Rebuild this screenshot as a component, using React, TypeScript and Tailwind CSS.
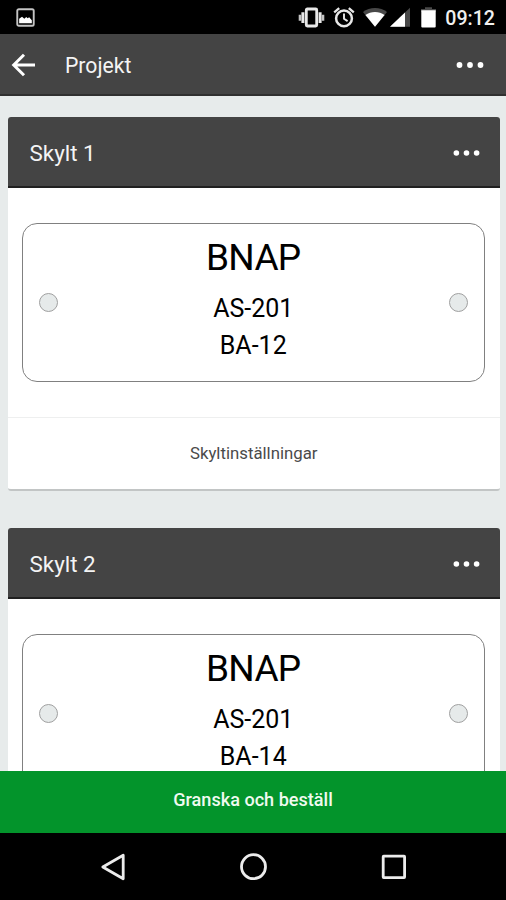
import React from "react";

type Sign = {
  id: number;
  title: string;
  lines: string[];
};

const signs: Sign[] = [
  { id: 1, title: "Skylt 1", lines: ["BNAP", "AS-201", "BA-12"] },
  { id: 2, title: "Skylt 2", lines: ["BNAP", "AS-201", "BA-14"] },
];

const StatusBar = () => (
  <div className="flex h-[34px] shrink-0 items-center justify-between bg-black pl-4 pr-[11px]">
    <svg className="h-[19px] w-[19px]" viewBox="0 0 18 18" fill="none">
      <rect x="1.2" y="1.2" width="15.6" height="15.6" rx="1.5" stroke="#c4c4c4" strokeWidth="1.8" />
      <path d="M3 14.5v-4.2l2.7-2 2.2 2 1.8-1.8 1.3 1.3 1.5-1 2.5 2.7v3z" fill="#fff" />
    </svg>

    <div className="flex items-center pt-[2px]">
      {/* vibrate */}
      <svg className="h-6 w-[27px]" viewBox="0 0 27 24" fill="none" stroke="#e8e8e8">
        <rect x="8.3" y="3" width="10.4" height="17" rx="1" strokeWidth="2.8" />
        <path d="M4.9 6.3v10.8M22.1 6.3v10.8" strokeWidth="3" />
        <path d="M2 8.7v6M25 8.7v6" strokeWidth="2.6" stroke="#c4c4c4" />
      </svg>
      {/* alarm */}
      <svg className="ml-2 h-6 w-[22px]" viewBox="0 0 22 24" fill="none" stroke="#e8e8e8">
        <circle cx="11" cy="12.4" r="7.9" strokeWidth="2.5" />
        <path d="M11 7.5v5.2l3.6 2.4" strokeWidth="1.9" />
        <path d="M1.2 6.4l5-4.2M20.8 6.4l-5-4.2" strokeWidth="2.3" />
      </svg>
      {/* wifi */}
      <svg className="ml-2 h-6 w-6" viewBox="0 0 24 24">
        <path d="M0 6C6.5.5 17.5.5 24 6L12 20.7z" fill="#484848" />
        <path d="M2.4 9C8 5 16 5 21.6 9L12 20.7z" fill="#fff" />
      </svg>
      {/* signal */}
      <svg className="ml-[3px] h-6 w-5" viewBox="0 0 20 24">
        <path d="M0 20.7L20 1.7v19z" fill="#484848" />
        <path d="M0 20.7L15 6.5v14.2z" fill="#fff" />
      </svg>
      {/* battery */}
      <svg className="ml-[11px] h-6 w-[15px]" viewBox="0 0 15 24">
        <path d="M4 1.2h7v1.8h4v3H0V3h4z" fill="#484848" />
        <path d="M.3 4.2h14.4v16.2a1 1 0 0 1-1 1H1.3a1 1 0 0 1-1-1z" fill="#fff" />
      </svg>
      <span className="ml-[9px] pt-px text-[19.6px] leading-6 font-medium text-[#f0f0f0]">09:12</span>
    </div>
  </div>
);

const MoreIcon = ({ className }: { className: string }) => (
  <svg className={className} viewBox="0 0 28 8" fill="#fff">
    <circle cx="3.5" cy="4" r="2.9" />
    <circle cx="14" cy="4" r="2.9" />
    <circle cx="24.5" cy="4" r="2.9" />
  </svg>
);

const AppBar = () => (
  <header className="flex h-[62px] shrink-0 items-center border-b-2 border-[#303030] bg-[#444444] pl-[11px] pr-[21px] text-white">
    <svg className="mt-px h-6 w-6" viewBox="0 0 24 24" fill="none" stroke="#fff" strokeWidth="3">
      <path d="M13 1.7L2.7 12 13 22.3M2.7 12H24" />
    </svg>
    <h1 className="ml-[30px] pt-[3px] text-[21.2px] leading-7 text-[#f4f4f4]">Projekt</h1>
    <button className="ml-auto">
      <MoreIcon className="mt-[2px] h-2 w-[30px]" />
    </button>
  </header>
);

const Hole = () => (
  <span className="h-[19px] w-[19px] rounded-full border-[1.5px] border-[#a0a0a0] bg-[#e6eaea]" />
);

const SignCard = ({ sign }: { sign: Sign }) => {
  const [heading, ...rows] = sign.lines;

  return (
    <section className="h-[374px] shrink-0 overflow-hidden rounded-[3px] border-b-2 border-[#c2c5c5] bg-white">
      <div className="flex h-[71px] items-center justify-between border-b-2 border-[#202020] bg-[#444444] pt-[3px] pl-[22px] pr-5">
        <h2 className="text-[22.4px] leading-7 text-[#f4f4f4]">{sign.title}</h2>
        <button>
          <MoreIcon className="h-2 w-[27px]" />
        </button>
      </div>

      <div className="h-[230px] border-b border-[#eeefef] pt-[35px] pr-[15px] pl-[14px]">
        <div className="flex h-[159px] items-center justify-between rounded-[15px] border border-[#808080] px-4">
          <Hole />
          <div className="flex flex-col items-center self-start pt-[12px] text-black">
            <div className="mb-[11px] text-[37px] leading-[44px] tracking-[-0.7px]">{heading}</div>
            {rows.map((row) => (
              <div key={row} className="text-[25px] leading-[36.5px]">
                {row}
              </div>
            ))}
          </div>
          <Hole />
        </div>
      </div>

      <button className="flex h-[71px] w-full items-center justify-center pt-px text-[16.8px] text-[#4a4a4a]">
        Skyltinställningar
      </button>
    </section>
  );
};

const NavBar = () => (
  <nav className="flex h-[67px] shrink-0 items-center justify-between bg-black px-[99px]">
    <svg className="h-7 w-7" viewBox="0 0 28 28" fill="none" stroke="#ececec" strokeWidth="2.8">
      <path d="M24.2 2.2v23.6L3.8 14z" strokeLinejoin="round" />
    </svg>
    <svg className="h-7 w-7" viewBox="0 0 28 28" fill="none" stroke="#ececec" strokeWidth="2.8">
      <circle cx="14.5" cy="13.7" r="12" />
    </svg>
    <svg className="h-7 w-7" viewBox="0 0 28 28" fill="none" stroke="#ececec" strokeWidth="2.8">
      <rect x="4.2" y="3.2" width="21.4" height="21.4" rx="0.5" />
    </svg>
  </nav>
);

const App = () => {
  return (
    <div className="flex h-[900px] w-[506px] flex-col overflow-hidden bg-[#e7ebeb] font-['Roboto',sans-serif]">
      <StatusBar />
      <AppBar />

      <main className="flex min-h-0 flex-1 flex-col gap-[37px] overflow-hidden pt-[21px] pr-[6px] pl-[7.5px]">
        {signs.map((sign) => (
          <SignCard key={sign.id} sign={sign} />
        ))}
      </main>

      <button className="flex h-[62px] shrink-0 items-center justify-center bg-[#03942b] pb-[4px] text-[18.1px] font-medium text-[#f0faf0]">
        Granska och beställ
      </button>
      <NavBar />
    </div>
  );
};

export default App;
